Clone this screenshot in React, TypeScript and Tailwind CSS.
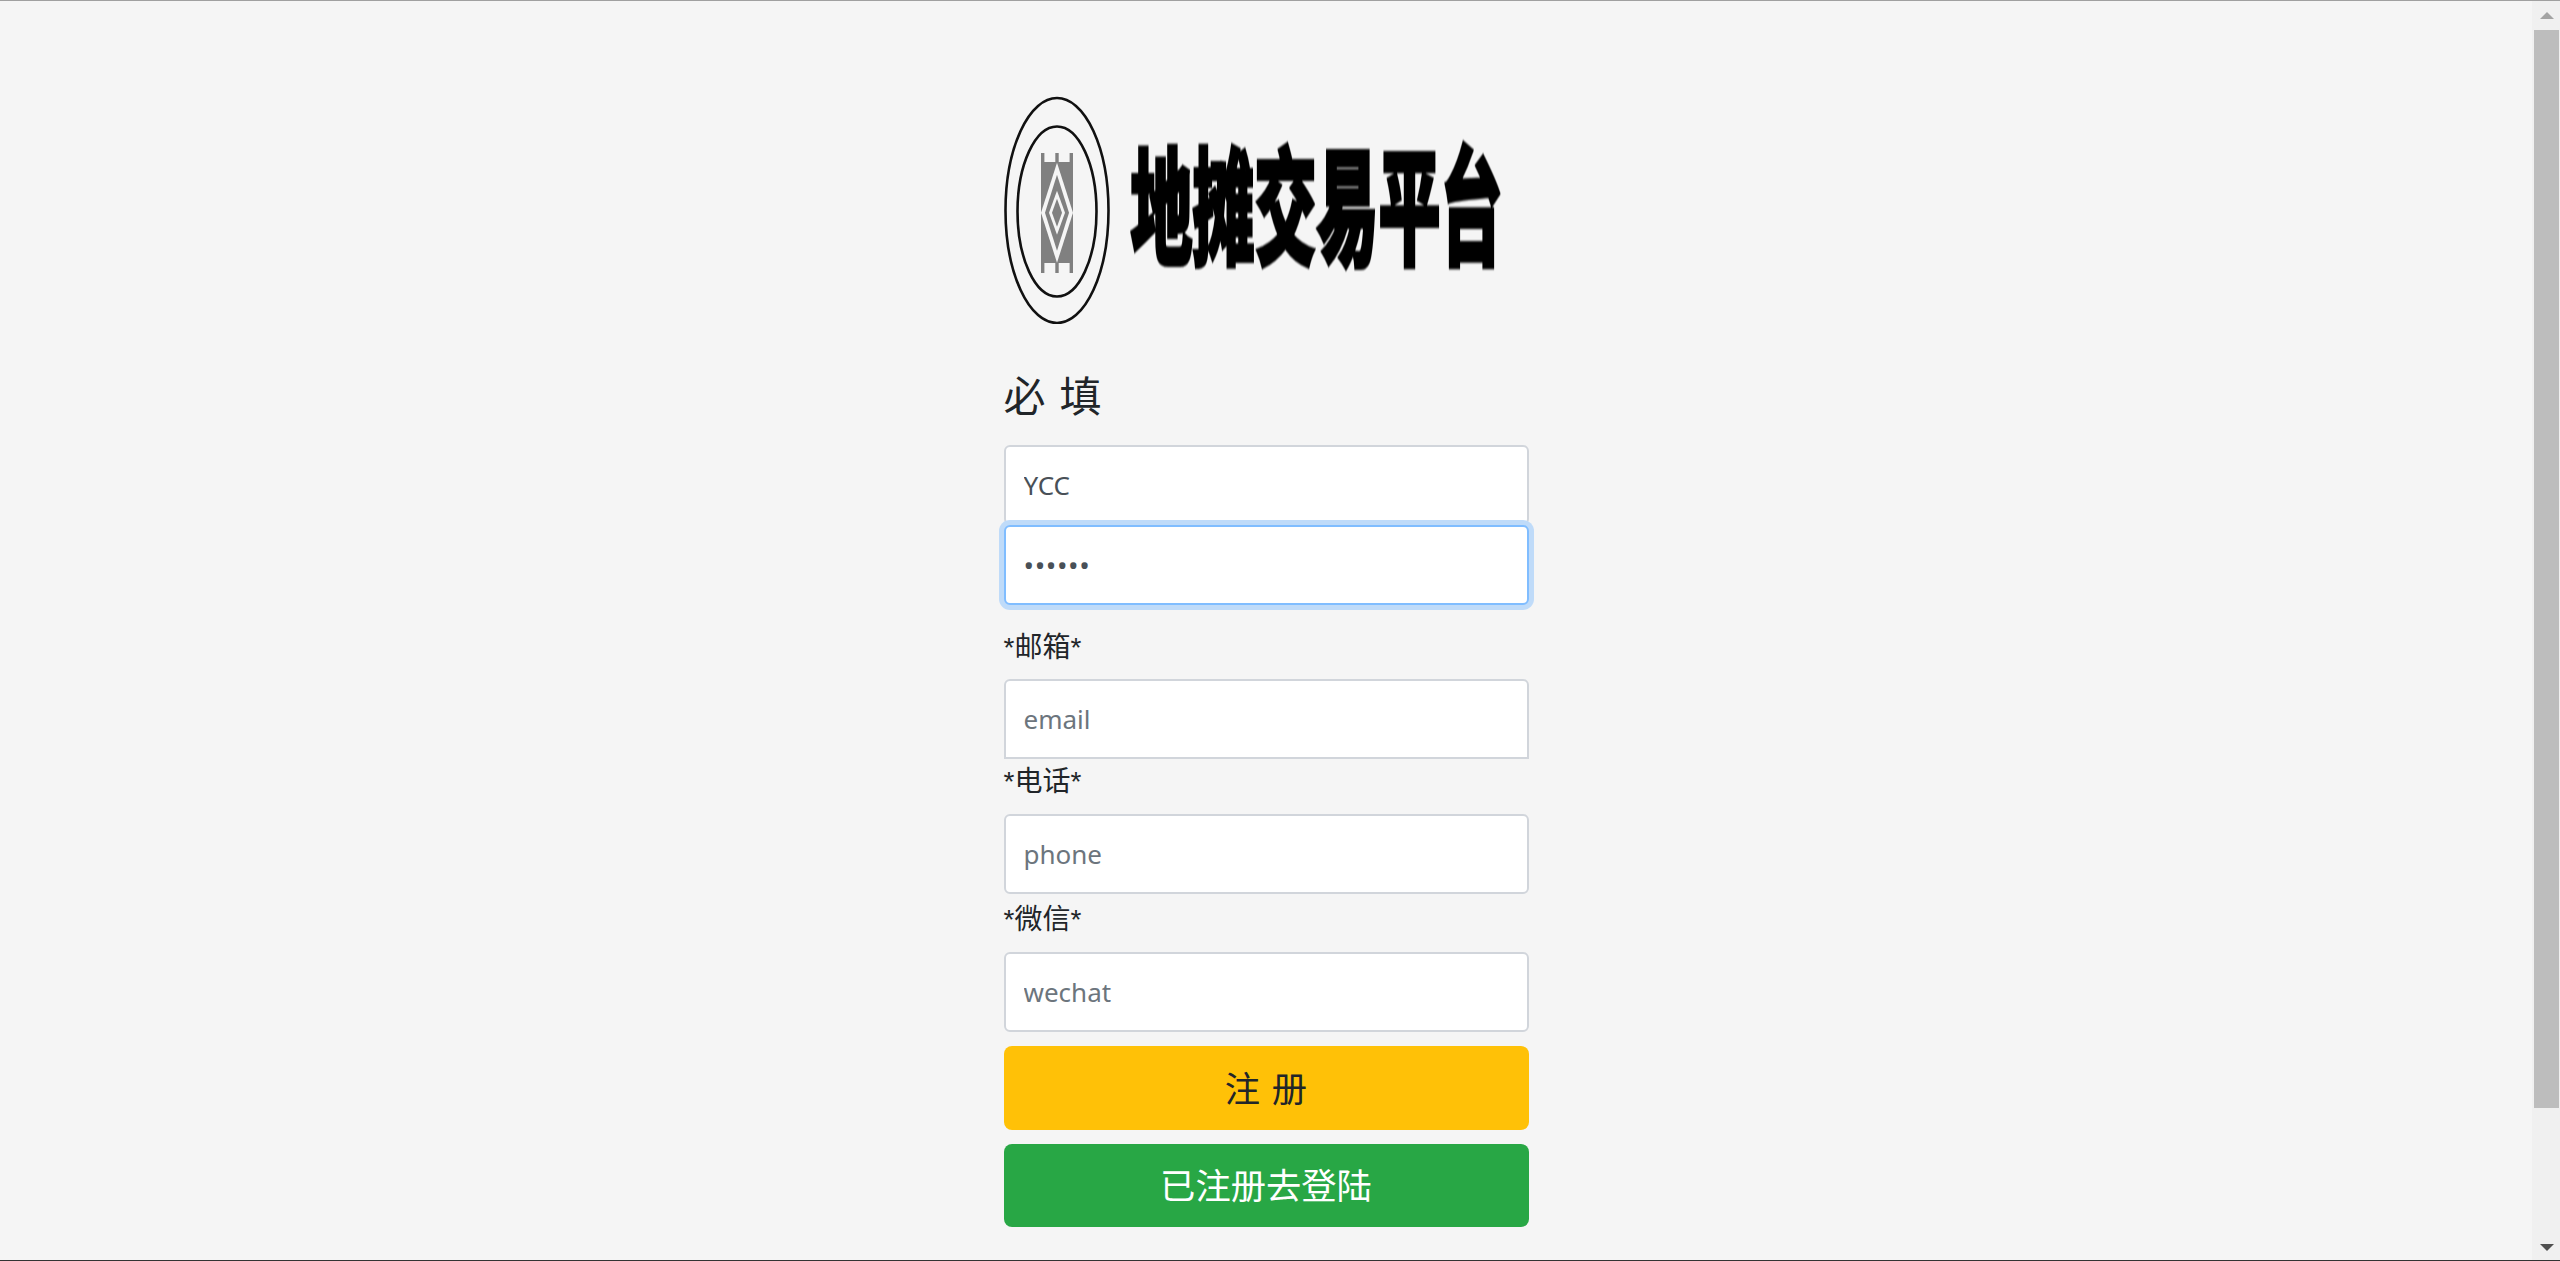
const fontStack = "font-['Noto_Sans','Noto_Sans_CJK_SC',sans-serif]";

function Diamond({ hw, hh, fill }: { hw: number; hh: number; fill: string }) {
  const cx = 53;
  const cy = 116.7;
  return <polygon points={`${cx},${cy - hh} ${cx + hw},${cy} ${cx},${cy + hh} ${cx - hw},${cy}`} fill={fill} />;
}

function LogoMark() {
  return (
    <svg width="106" height="228" viewBox="0 0 106 228" className="shrink-0 blur-[0.4px]">
      <ellipse cx="53" cy="114.5" rx="51.5" ry="112.5" fill="none" stroke="#111" strokeWidth="2.6" />
      <ellipse cx="53" cy="115.5" rx="39.5" ry="85" fill="none" stroke="#111" strokeWidth="2.6" />
      <rect x="37" y="66" width="32" height="101" fill="#808080" />
      <rect x="37" y="57" width="3.4" height="120" fill="#808080" />
      <rect x="51.3" y="57" width="3.4" height="120" fill="#808080" />
      <rect x="65.6" y="57" width="3.4" height="120" fill="#808080" />
      <Diamond hw={16} hh={50} fill="#f5f5f5" />
      <Diamond hw={12} hh={38} fill="#808080" />
      <Diamond hw={8} hh={22} fill="#f5f5f5" />
      <Diamond hw={5} hh={14} fill="#808080" />
      <Diamond hw={2.7} hh={7.5} fill="#808080" />
    </svg>
  );
}

function Logo() {
  return (
    <div className="flex items-start pt-[2px]">
      <LogoMark />
      <div className="ml-[20px] mt-[38px] w-[374px] h-[132px] flex items-center justify-center overflow-visible">
        <span className="block text-[62px] leading-none font-black text-black whitespace-nowrap scale-y-[2.05] blur-[0.4px] font-['Noto_Sans_CJK_SC',sans-serif] [-webkit-text-stroke:2px_#000]">
          地摊交易平台
        </span>
      </div>
    </div>
  );
}

function Field({
  focused = false,
  className = "",
  ...props
}: React.InputHTMLAttributes<HTMLInputElement> & { focused?: boolean }) {
  const state = focused
    ? "relative border-[#80bdff] shadow-[0_0_0_5px_#bfdbf9] text-[28px] tracking-[0.6px]"
    : "border-[#d1d5db] text-[26px]";
  return (
    <input
      {...props}
      className={`block w-full h-[80px] px-[18px] bg-white border-2 text-[#495057] placeholder:text-[#6c757d] outline-none ${fontStack} ${state} ${className}`}
    />
  );
}

function Label({ text, className = "" }: { text: string; className?: string }) {
  return (
    <label
      className={`block h-[38px] leading-[38px] text-[28px] text-[#212529] font-['Liberation_Sans','Noto_Sans_CJK_SC',sans-serif] ${className}`}
    >
      {text}
    </label>
  );
}

function Scrollbar() {
  return (
    <div className="w-[28px] shrink-0 bg-[#f0f0f0] flex flex-col">
      <div className="h-[29px] flex items-center justify-center pl-[1px]">
        <div className="w-0 h-0 border-x-[7px] border-x-transparent border-b-[7px] border-b-[#a3a3a3]" />
      </div>
      <div className="h-[1078px] ml-[2px] mr-[1px] bg-[#bdbdbd]" />
      <div className="flex-1 flex items-end justify-center pl-[1px] pb-[9px]">
        <div className="w-0 h-0 border-x-[7px] border-x-transparent border-t-[7px] border-t-[#505050]" />
      </div>
    </div>
  );
}

export default function App() {
  return (
    <div className={`h-[1261px] flex flex-col overflow-hidden bg-[#f5f5f5] ${fontStack}`}>
      <div className="h-px bg-[#a0a0a0] shrink-0" />
      <div className="flex-1 flex min-h-0">
        <main className="flex-1 flex justify-center">
          <form className="w-[525px] pt-[93px]">
            <Logo />
            <h4 className="mt-[43px] h-[58px] leading-[58px] text-[42px] text-[#212529] [word-spacing:3px]">必 填</h4>
            <Field type="text" defaultValue="YCC" className="mt-[20px] rounded-[6px]" />
            <Field type="password" defaultValue="123456" focused className="rounded-[6px]" />
            <Label text="*邮箱*" className="mt-[24px] mb-[12px]" />
            <Field type="text" placeholder="email" className="rounded-t-[6px]" />
            <Label text="*电话*" className="mt-[4px] mb-[13px]" />
            <Field type="text" placeholder="phone" className="rounded-[6px]" />
            <Label text="*微信*" className="mt-[7px] mb-[13px]" />
            <Field type="text" placeholder="wechat" className="rounded-[6px]" />
            <button
              type="button"
              className="block w-full h-[84px] mt-[14px] rounded-[8px] bg-[#ffc107] text-[35.3px] text-[#212529] [word-spacing:2.5px]"
            >
              注 册
            </button>
            <button
              type="button"
              className="block w-full h-[83px] mt-[14px] rounded-[8px] bg-[#28a745] text-[35.3px] text-white"
            >
              已注册去登陆
            </button>
          </form>
        </main>
        <Scrollbar />
      </div>
      <div className="h-px bg-[#333] shrink-0" />
    </div>
  );
}
